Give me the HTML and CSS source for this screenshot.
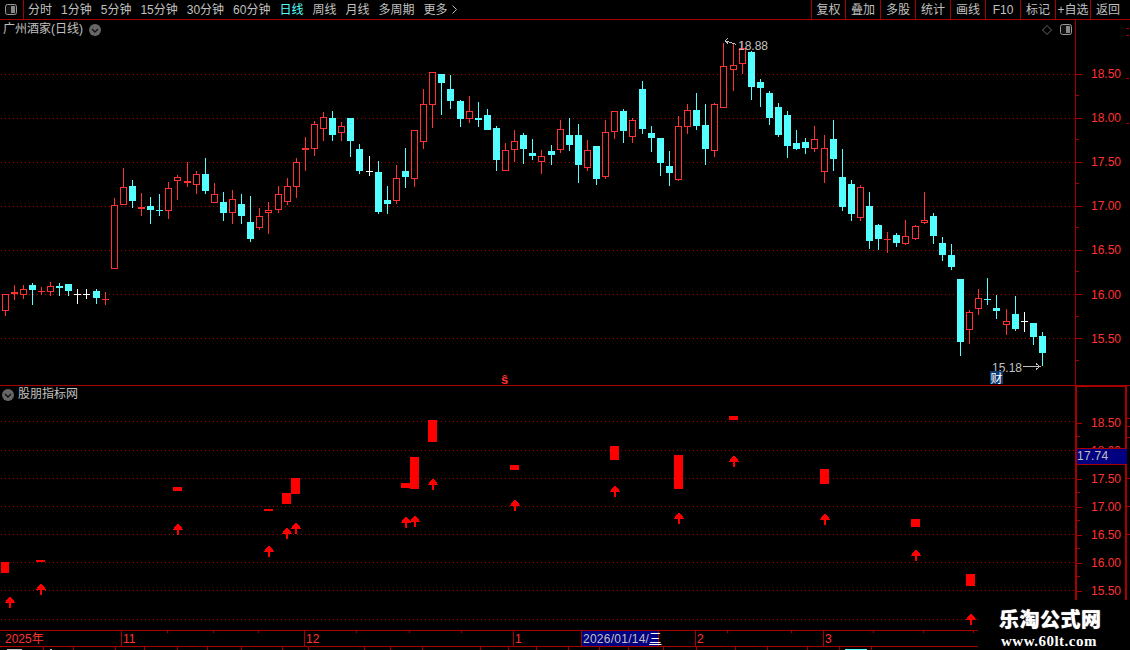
FILE: index.html
```html
<!DOCTYPE html>
<html lang="zh-CN">
<head>
<meta charset="utf-8">
<title>广州酒家(日线)</title>
<link rel="stylesheet" href="styles.css">
</head>
<body>
<div class="screen">
  <header class="toolbar">
    <div class="layout-btn">
      <svg class="pane-icon" width="12" height="11" viewBox="0 0 12 11"><rect x="0.5" y="0.5" width="11" height="10" rx="2" class="pane-frame"/><rect x="6" y="2" width="4" height="7" class="pane-fill"/></svg>
    </div>
    <nav class="periods">
      <span>分时</span><span>1分钟</span><span>5分钟</span><span>15分钟</span><span>30分钟</span><span>60分钟</span>
      <span class="active">日线</span><span>周线</span><span>月线</span><span>多周期</span>
      <span class="more">更多<svg width="5" height="9" viewBox="0 0 5 9"><path d="M0.5 0.5 L4.5 4.5 L0.5 8.5" class="chev"/></svg></span>
    </nav>
    <nav class="actions">
      <span>复权</span><span>叠加</span><span>多股</span><span>统计</span><span>画线</span><span>F10</span><span>标记</span><span>+自选</span><span>返回</span>
    </nav>
  </header>

  <section class="panel panel-main">
    <div class="plot">
      <svg id="main-plot" class="chart" width="1075" height="365" viewBox="0 20 1075 365"></svg>
      <div class="legend">
        <span>广州酒家(日线)</span>
        <svg class="drop" width="12" height="12" viewBox="0 0 12 12"><circle cx="6" cy="6" r="6" class="drop-bg"/><path d="M3 5 L6 8 L9 5" class="drop-chev"/></svg>
      </div>
      <div class="plot-tools">
        <svg width="10" height="10" viewBox="0 0 10 10"><path d="M5 0.5 L9.5 5 L5 9.5 L0.5 5 Z" class="diamond"/></svg>
        <svg class="pane-icon" width="12" height="11" viewBox="0 0 12 11"><rect x="0.5" y="0.5" width="11" height="10" rx="2" class="pane-frame"/><rect x="6" y="2" width="4" height="7" class="pane-fill"/></svg>
      </div>
      <span class="fin-tag">财</span>
    </div>
    <div class="scale scale-main">
      <div class="row"><i></i><b>18.50</b></div>
      <div class="row"><i></i><b>18.00</b></div>
      <div class="row"><i></i><b>17.50</b></div>
      <div class="row"><i></i><b>17.00</b></div>
      <div class="row"><i></i><b>16.50</b></div>
      <div class="row"><i></i><b>16.00</b></div>
      <div class="row"><i></i><b>15.50</b></div>
    </div>
    <div class="rail rail-main"></div>
  </section>

  <section class="panel panel-sub">
    <div class="plot">
      <svg id="sub-plot" class="chart" width="1075" height="244" viewBox="0 386 1075 244"></svg>
      <div class="legend legend-sub">
        <svg class="drop" width="12" height="12" viewBox="0 0 12 12"><circle cx="6" cy="6" r="6" class="drop-bg"/><path d="M3 5 L6 8 L9 5" class="drop-chev"/></svg>
        <span>股朋指标网</span>
      </div>
    </div>
    <div class="scale scale-sub">
      <div class="row"><i></i><b>18.50</b></div>
      <div class="row"><i></i><b>18.00</b></div>
      <div class="row"><i></i><b>17.50</b></div>
      <div class="row"><i></i><b>17.00</b></div>
      <div class="row"><i></i><b>16.50</b></div>
      <div class="row"><i></i><b>16.00</b></div>
      <div class="row"><i></i><b>15.50</b></div>
      <div class="cursor-price">17.74</div>
    </div>
    <div class="rail rail-sub"></div>
  </section>

  <footer class="timeline" id="timeline"></footer>
  <div class="strip"><svg id="strip" width="1130" height="3" viewBox="0 647 1130 3"></svg></div>

  <aside class="watermark">
    <div class="wm-title">乐淘公式网</div>
    <div class="wm-url">www.60lt.com</div>
  </aside>
</div>
<script src="chart.js"></script>
</body>
</html>
```

FILE: styles.css
```css
* { box-sizing: border-box; }
html, body { margin: 0; padding: 0; background: #000; }
body { width: 1130px; height: 650px; overflow: hidden; font: 12px "Noto Sans CJK SC", "Liberation Sans", sans-serif; color: #c0c0c0; }
.screen { position: relative; width: 1130px; height: 650px; display: flex; flex-direction: column; }

/* toolbar */
.toolbar { height: 20px; flex: none; display: flex; align-items: stretch; border-bottom: 1px solid #a80000; line-height: 20px; }
.layout-btn { width: 24px; border-right: 1px solid #a80000; display: flex; align-items: center; padding-left: 5px; }
.pane-icon { display: block; }
.pane-frame { fill: #111; stroke: #999; }
.pane-fill { fill: #888; }
.periods { display: flex; gap: 9px; padding-left: 4px; white-space: nowrap; }
.periods span { font-family: "Liberation Sans", "Noto Sans CJK SC", sans-serif; }
.periods .active { color: #54ffff; }
.more { display: flex; align-items: center; gap: 4px; }
.chev { fill: none; stroke: #c0c0c0; }
.actions { margin-left: auto; margin-right: 5px; display: flex; }
.actions span { width: 35px; border-left: 1px solid #a80000; text-align: center; font-family: "Liberation Sans", "Noto Sans CJK SC", sans-serif; white-space: nowrap; }
.actions span:first-child { width: 34px; }

/* panels */
.panel { display: flex; flex: none; }
.panel-main { height: 366px; border-bottom: 1px solid #a80000; }
.panel-sub { height: 244px; }
.plot { position: relative; width: 1075px; flex: none; }
.chart { display: block; overflow: visible; shape-rendering: crispEdges; }
.legend { position: absolute; left: 3px; top: 1px; display: flex; align-items: center; gap: 6px; line-height: 17px; font-family: "Liberation Sans", "Noto Sans CJK SC", sans-serif; }
.legend-sub { left: 2px; top: 0; gap: 4px; }
.drop { display: block; }
.drop-bg { fill: #666; }
.drop-chev { fill: none; stroke: #111; stroke-width: 1.4; }
.plot-tools { position: absolute; right: 3px; top: 4px; display: flex; align-items: center; gap: 8px; }
.diamond { fill: none; stroke: #666; }
.fin-tag { position: absolute; left: 990px; top: 351px; width: 13px; height: 13px; background: #0a3a6e; color: #fff; font-size: 12px; line-height: 13px; text-align: center; }

/* chart marks */
.grid { stroke: #b00000; stroke-width: 1; stroke-dasharray: 1 3; shape-rendering: crispEdges; }
.up { fill: none; stroke: #ff3232; }
.up-fill { fill: #ff3232; }
.down-fill { fill: #54ffff; }
.flat-fill { fill: #fff; }
.signal { fill: #ff0000; }
.note { font: 12px "Liberation Sans", sans-serif; fill: #c0c0c0; shape-rendering: auto; }
.note-line { fill: none; stroke: #c0c0c0; }
.s-mark { font: bold 13px "Liberation Sans", sans-serif; fill: #ff3232; }

/* price scales */
.scale { position: relative; width: 51px; flex: none; border-left: 1px solid #a80000; }
.scale-main { padding-top: 32px; }
.scale-sub { padding-top: 22px; border-left-width: 2px; border-right: 2px solid #a80000; border-top: 1px solid #a80000; width: 52px; }
.row { position: relative; display: flex; align-items: center; height: 44.1px; }
.scale-sub .row { height: 28px; }
.row i { width: 6px; height: 1px; background: #a80000; margin-right: 9px; flex: none; }
.scale-sub .row i { width: 5px; }
.row::after { content: ""; position: absolute; left: 0; bottom: 0; width: 3px; height: 1px; background: #a80000; }
.row b { font: 12px "Liberation Sans", sans-serif; color: #ff3232; }
.cursor-price { position: absolute; left: 0; top: 61px; width: 50px; height: 17px; background: #000080; border-top: 1px solid #a80000; border-bottom: 1px solid #a80000; font: 12px/15px "Liberation Sans", sans-serif; color: #c0c0c0; letter-spacing: 0.3px; }
.rail { flex: 1; background-repeat: no-repeat; }
.rail-main { background-image: linear-gradient(#a80000, #a80000), linear-gradient(#a80000, #a80000), linear-gradient(#a80000, #a80000), linear-gradient(#a80000, #a80000); background-size: 3px 1px; background-position: 0 8px, 0 15px, 0 58px, 0 103px; }
.rail-sub { background-image: linear-gradient(#a80000, #a80000), linear-gradient(#a80000, #a80000), linear-gradient(#a80000, #a80000), linear-gradient(#a80000, #a80000), linear-gradient(#a80000, #a80000), linear-gradient(#a80000, #a80000); background-size: 3px 1px; background-position: 0 32px, 0 40px, 0 51px, 0 92px, 0 120px, 0 148px; }

/* time axis */
.timeline { height: 16px; flex: none; width: 978px; display: flex; border-top: 1px solid #a80000; font: 12px/16px "Liberation Sans", "Noto Sans CJK SC", sans-serif; color: #ff3232; }
.cell { position: relative; flex: none; padding-left: 1px; white-space: nowrap; }
.cell-major { border-left: 1px solid #a80000; }
.cell-minor::before { content: ""; position: absolute; left: 0; top: 0; width: 1px; height: 2px; background: #a80000; }
.cell-cursor { background: #000080; border-left: 1px solid #a80000; border-right: 1px solid #a80000; color: #c0c0c0; padding-left: 1px; letter-spacing: 0.25px; }
.cell-cursor u { color: #fff; }
.strip { height: 4px; flex: none; border-top: 1px solid #a80000; width: 978px; overflow: hidden; }
.strip svg { display: block; shape-rendering: crispEdges; }
.strip-tick { fill: #a80000; }
.strip-top { fill: #c0c0c0; }
.strip-top-c { fill: #54ffff; }

/* watermark */
.watermark { position: absolute; left: 978px; top: 600px; width: 152px; height: 50px; background: #000; color: #fff; }
.wm-title { font: 900 20px/24px "Noto Sans CJK SC", sans-serif; margin-top: 7px; padding-left: 21px; letter-spacing: 0.5px; text-shadow: 0 0 1px #ccc; white-space: nowrap; }
.wm-url { font: bold 15px/16px "Liberation Serif", serif; margin-top: 2px; padding-left: 23px; letter-spacing: 0.5px; white-space: nowrap; }
```

FILE: chart.js
```js
// Candles measured in thirds of a pixel from a base line, as [kind, high, top, bottom, low].
// kind: h hollow red, c cyan, r red cross, t cyan cross, w white cross
var SEGMENTS = [
  { base: 160, rows: [
    ['h',402,402,452,468],['r',375,396,402,420],['h',375,388,404,417],['c',369,375,390,435],
    ['r',381,393,396,405],['h',366,379,395,408],['c',369,378,384,408],['c',372,372,393,408],
    ['w',387,402,405,432],['w',387,402,405,417],['c',387,393,414,432],['r',396,418,421,435],
    ['h',114,136,326,326],['h',24,82,134,134],['c',60,78,123,144],['r',99,141,147,168],
    ['c',111,138,150,192],['t',102,150,153,168],['h',66,85,152,177],['h',45,52,62,120],
    ['r',6,63,69,81],['h',33,43,74,102],['c',-6,42,93,102],['h',69,103,128,128],
    ['c',96,126,159,183],['h',90,118,158,192],['c',102,132,168,192],['c',108,186,237,246],
    ['h',144,169,203,210],['h',126,151,158,222],['h',78,103,149,159],['h',54,79,125,135],
    ['h',-6,7,80,114] ] },
  { base: 60, rows: [
    ['r',231,264,270,333],['h',183,193,266,288],['h',156,172,206,243],['c',153,174,225,243],
    ['h',186,199,218,243],['c',174,174,243,291],['c',252,267,333,342],['w',288,333,336,348],
    ['c',303,336,456,462],['c',378,420,432,462],['h',315,355,422,432],['c',264,333,351,384],
    ['h',211,211,356,381],['h',87,133,245,267],['h',37,37,134,204],['c',42,42,69,165],
    ['c',45,87,123,147],['c',120,123,177,201],['h',108,154,178,189],['c',126,174,180,201],
    ['c',147,165,210,210],['c',198,204,300,333],['h',249,271,332,332],['h',210,244,269,306],
    ['c',219,225,267,312],['c',237,279,288,300],['h',270,289,307,342],['c',255,273,285,315],
    ['h',180,208,269,279],['c',174,225,255,273],['c',192,225,315,369],['h',240,271,323,333],
    ['c',258,258,357,375] ] },
  { base: 30, rows: [
    ['h',270,307,440,447],['h',244,244,307,327],['c',237,243,303,339],['h',264,271,320,339],
    ['c',153,177,297,312],['c',288,309,324,366],['c',324,324,399,438],['c',363,408,429,468],
    ['h',258,289,449,453],['h',222,241,290,312],['c',189,240,288,300],['c',222,285,357,405],
    ['h',219,223,362,381],['h',40,109,233,233],['h',40,106,119,183],['h',33,55,101,132],
    ['c',63,66,171,210],['c',147,156,174,231],['c',183,189,264,285],['c',219,231,315,321],
    ['c',243,255,348,384],['c',300,339,357,360],['c',324,336,354,372],['h',288,328,356,366],
    ['h',315,355,425,459],['c',270,327,387,423] ] },
  { base: 130, rows: [
    ['c',57,141,231,243],['c',150,162,252,273],['h',165,172,263,273],['c',186,228,333,357],
    ['c',282,285,327,360],['r',306,327,330,369],['c',309,315,339,351],['h',270,319,341,345],
    ['h',285,289,326,329],['h',186,271,278,282],['c',249,258,318,342],['c',321,339,375,393],
    ['c',342,375,411,420],['c',447,447,636,678],['h',540,547,599,642],['h',477,505,536,555],
    ['t',444,507,510,525],['c',495,534,543,567],['h',537,574,584,615],['c',498,552,597,603],
    ['w',546,573,576,606],['c',579,579,621,645],['c',606,618,669,708] ] }
];

// Signal bars of the lower panel: x, top, bottom. All are 9px wide unless a width follows.
var BARS = [[0,562,573,8],[36,560,562],[173,487,491],[264,509,511],[282,493,504],[291,478,494],
  [401,483,488],[410,457,489],[428,420,442],[510,465,470],[610,446,460],[674,455,489],[729,416,420],
  [820,469,484],[911,519,527],[966,574,586]];
// Arrow tips of the lower panel.
var ARROWS = [[10,596],[41,583],[178,523],[269,545],[287,527],[296,522],[406,516],[415,515],[433,478],
  [515,499],[615,485],[679,512],[734,455],[825,513],[916,549],[971,613]];

var MAIN_GRID = [74,118,162,206,250,294,338];
var SUB_GRID = [421,450,478,506,534,562,590,619];

// Time axis: start x, kind, label.
var TICKS = [[0,'plain','2025年'],[121,'major','11'],[167,'minor'],[213,'minor'],[258,'minor'],[304,'major','12'],
  [356,'minor'],[409,'minor'],[461,'minor'],[513,'major','1'],[581,'cursor'],[659,'plain'],[695,'major','2'],
  [727,'minor'],[791,'minor'],[823,'major','3'],[873,'minor'],[923,'minor'],[973,'minor'],[978,'end']];
var STRIP = [43,73,115,144,177,207,241,282,308,364,390,422,480,508,536,568,599,628,663,696,735,767,807,839,871];

function grid(ys) {
  return ys.map(function (y) {
    return '<line class="grid" x1="1" x2="1075" y1="' + (y + 0.5) + '" y2="' + (y + 0.5) + '"/>';
  }).join('');
}
function rect(cls, x, y, w, h) {
  return '<rect class="' + cls + '" x="' + x + '" y="' + y + '" width="' + w + '" height="' + h + '"/>';
}
function candle(i, c, base) {
  var x = Math.round(4.5 + 9.1 * i) - 3;
  var yy = function (v) { return Math.round(base + v / 3); };
  var hi = yy(c[1]), top = yy(c[2]), bot = yy(c[3]), lo = yy(c[4]);
  var kind = c[0], s = '';
  var fill = { h: 'up-fill', r: 'up-fill', c: 'down-fill', t: 'down-fill', w: 'flat-fill' }[kind];
  s += rect(fill, x + 3, hi, 1, Math.max(lo - hi, 1));
  if (kind === 'h') {
    s += '<rect x="' + x + '" y="' + top + '" width="7" height="' + (bot - top) + '" fill="#000"/>';
    s += '<rect class="up" x="' + (x + 0.5) + '" y="' + (top + 0.5) + '" width="6" height="' + Math.max(bot - top - 1, 1) + '"/>';
  } else {
    s += rect(fill, x, top, 7, Math.max(bot - top, 1));
  }
  return s;
}
function arrow(t) {
  var x = t[0], y = t[1];
  var pts = [[x, y], [x + 5.5, y + 7], [x + 1, y + 7], [x + 1, y + 12], [x - 1, y + 12], [x - 1, y + 7], [x - 5.5, y + 7]];
  return '<polygon class="signal" points="' + pts.map(function (p) { return p.join(','); }).join(' ') + '"/>';
}

// Upper panel
var html = grid(MAIN_GRID), index = 0;
SEGMENTS.forEach(function (seg) {
  seg.rows.forEach(function (c) { html += candle(index, c, seg.base); index++; });
});
html += '<text class="note" x="738" y="50">18.88</text>' +
  '<path class="note-line" d="M725 40.5 L728 38.5 M725 40.5 L728 43.5 M725 40.5 L736 44.5"/>' +
  '<text class="note" x="992" y="372">15.18</text>' +
  '<path class="note-line" d="M1023 366.5 H1040 M1036 363.5 L1040 366.5 L1036 369.5"/>' +
  '<text class="s-mark" x="501" y="384">ŝ</text>';
document.getElementById('main-plot').innerHTML = html;

// Lower panel
html = grid(SUB_GRID);
BARS.forEach(function (b) { html += rect('signal', b[0] + (b[3] ? 1 : 0), b[1], b[3] || 9, b[2] - b[1]); });
ARROWS.forEach(function (a) { html += arrow(a); });
document.getElementById('sub-plot').innerHTML = html;

// Time axis
var tl = document.getElementById('timeline');
TICKS.forEach(function (t, i) {
  if (t[1] === 'end') return;
  var el = document.createElement('div');
  el.className = 'cell cell-' + t[1];
  el.style.width = (TICKS[i + 1][0] - t[0]) + 'px';
  if (t[1] === 'cursor') {
    el.innerHTML = '2026/01/14/<u>三</u>';
  } else if (t[2]) {
    el.textContent = t[2];
  }
  if (i === 0) el.style.paddingLeft = '5px';
  tl.appendChild(el);
});

// Bottom strip ticks, with the tops of the row below
html = STRIP.map(function (x) { return rect('strip-tick', x, 647, 1, 3); }).join('');
html += rect('strip-top', 7, 649, 15, 1) + rect('strip-top', 50, 649, 2, 1) + rect('strip-top-c', 845, 649, 22, 1);
document.getElementById('strip').innerHTML = html;
```
